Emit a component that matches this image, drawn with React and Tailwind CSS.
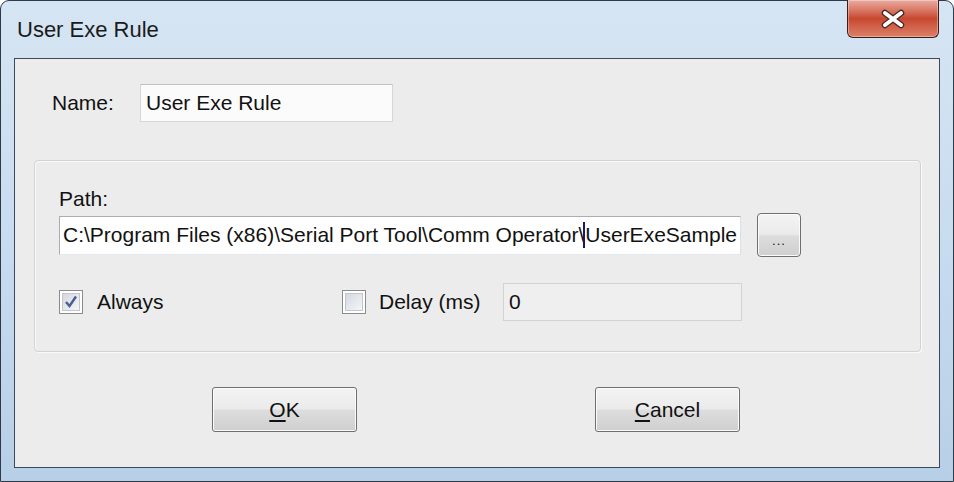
import React from 'react';

// Win7-style "User Exe Rule" dialog
const font = { fontFamily: '"Liberation Sans", Arial, sans-serif' };

const CloseButton = () => (
    <div className="mr-[14px] w-[92px] h-[38px] -mt-px rounded-b-[6px] border border-t-0 border-[#3e1d17] bg-gradient-to-b from-[#e9aca1] via-[#c8472f] to-[#dc8068] shadow-[inset_0_0_0_1px_rgba(255,255,255,0.35)] flex items-center justify-center">
        <svg width="28" height="20" viewBox="0 0 28 20">
            <path d="M6 4 L22 16 M22 4 L6 16" stroke="#4a2620" strokeWidth="6.5" strokeLinecap="round" />
            <path d="M6 4 L22 16 M22 4 L6 16" stroke="#ffffff" strokeWidth="4" strokeLinecap="round" />
        </svg>
    </div>
);

const CheckBox = ({ checked }) => (
    <div className="w-[24px] h-[24px] border border-[#8b8b8b] bg-white p-[2px] shrink-0">
        <div className="w-full h-full border border-[#c2c6cc] bg-gradient-to-br from-[#d4d9e0] to-[#f4f5f7] flex items-center justify-center">
            {checked && (
                <svg width="14" height="14" viewBox="0 0 14 14">
                    <path d="M2 7 L5.5 11 L12 1.5" stroke="#4b5e8f" strokeWidth="2.4" fill="none" />
                </svg>
            )}
        </div>
    </div>
);

const Button = ({ children, className = '' }) => (
    <div className={`rounded-[3px] border border-[#6f6f6f] shadow-[inset_0_0_0_1px_#fbfbfb] bg-[linear-gradient(#f3f3f3_0%,#ebebeb_48%,#dddddd_52%,#cfcfcf_100%)] flex items-center justify-center text-[21px] text-[#111] ${className}`}>
        {children}
    </div>
);

const App = () => {
    return (
        <div className="w-[954px] h-[482px] overflow-hidden" style={font}>
            <div className="w-full h-full flex flex-col border border-[#2f3a46] rounded-t-[9px] bg-gradient-to-b from-[#d6e5f3] via-[#c8dcf0] to-[#b7cfe7]">
                {/* Title bar */}
                <div className="h-[57px] flex items-start justify-between shrink-0">
                    <div className="pl-[16px] pt-[16px] text-[22px] leading-[26px] text-[#1b1b1b]">User Exe Rule</div>
                    <CloseButton />
                </div>

                {/* Client area */}
                <div className="flex-1 mx-[13px] mb-[13px] border border-[#3c4957] bg-[#ececec] flex flex-col text-[21px] text-[#111]">
                    {/* Name */}
                    <div className="flex items-center pl-[37px] mt-[25px]">
                        <div className="w-[88px]">Name:</div>
                        <div className="w-[253px] h-[38px] border border-[#d6d6d6] border-t-[#c0c0c0] bg-[#fbfbfb] px-[5px] flex items-center">
                            User Exe Rule
                        </div>
                    </div>

                    {/* Group */}
                    <div className="ml-[19px] mt-[38px] w-[887px] h-[192px] rounded-[4px] border border-[#d2d2d2] shadow-[inset_1px_1px_0_#fafafa,1px_1px_0_#fafafa] pl-[24px] pt-[26px] flex flex-col">
                        <div className="h-[24px] leading-[24px]">Path:</div>
                        <div className="flex items-center gap-[16px] mt-[2px]">
                            <div className="w-[682px] h-[39px] border border-[#abadb3] border-b-[#e3e9ef] border-r-[#dbdfe6] bg-white pl-[3px] flex items-center overflow-hidden whitespace-nowrap">
                                <span>{'C:\\Program Files (x86)\\Serial Port Tool\\Comm Operator\\'}</span>
                                <span className="inline-block w-[2px] h-[26px] bg-[#1c1860] -ml-[1px]"></span>
                                <span>UserExeSample</span>
                            </div>
                            <Button className="w-[44px] h-[44px] rounded-[4px] border-[#3a3a3a] items-end pb-[9px]">
                                <span className="text-[13px] leading-none tracking-[1px]">...</span>
                            </Button>
                        </div>
                        <div className="flex items-center mt-[26px]">
                            <div className="w-[283px] flex items-center">
                                <CheckBox checked />
                                <span className="ml-[14px]">Always</span>
                            </div>
                            <CheckBox />
                            <span className="ml-[13px] w-[124px]">Delay (ms)</span>
                            <div className="w-[239px] h-[38px] border border-[#d3d3d3] bg-[#efefef] px-[5px] flex items-center">
                                0
                            </div>
                        </div>
                    </div>

                    {/* Buttons */}
                    <div className="flex mt-[35px] ml-[197px] gap-[238px]">
                        <Button className="w-[145px] h-[45px]">
                            <span><span className="underline underline-offset-[3px]">O</span>K</span>
                        </Button>
                        <Button className="w-[145px] h-[45px]">
                            <span><span className="underline underline-offset-[3px]">C</span>ancel</span>
                        </Button>
                    </div>
                </div>
            </div>
        </div>
    );
};

export default App;
